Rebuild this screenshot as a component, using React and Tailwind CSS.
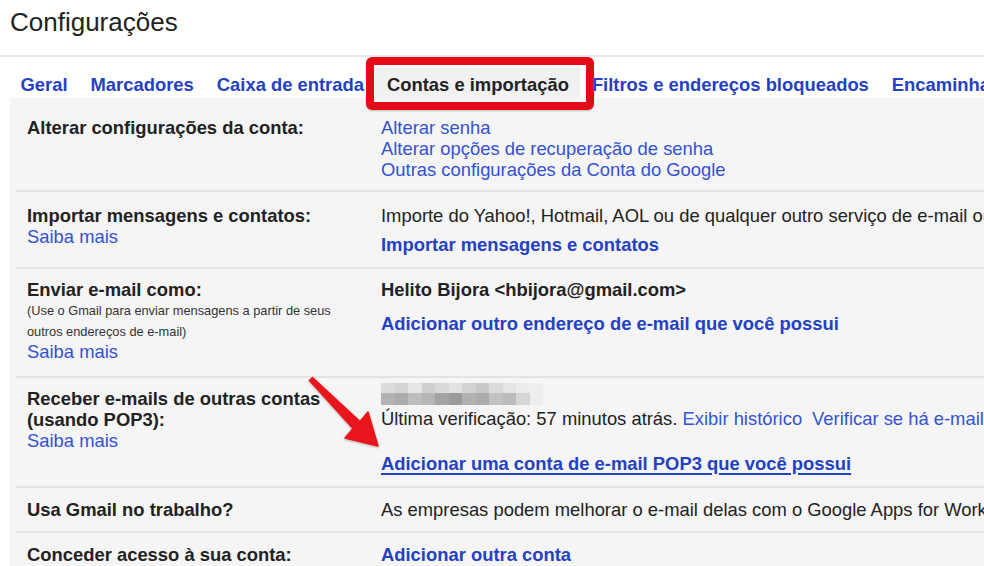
import React from 'react';

const tabs = [
  { label: 'Geral' },
  { label: 'Marcadores' },
  { label: 'Caixa de entrada' },
  { label: 'Contas e importação', active: true },
  { label: 'Filtros e endereços bloqueados' },
  { label: 'Encaminhamento e POP/IMAP' },
];

const blurTop = ['#dcdcdc', '#d4d4d4', '#e6e6e6', '#cfcfcf', '#dadada', '#e2e2e2', '#d2d2d2', '#c9c9c9', '#dbdbdb', '#e5e5e5', '#ececec', '#eeeeee'];
const blurBottom = ['#b3b3b3', '#ababab', '#bdbdbd', '#b6b6b6', '#a3a3a3', '#9a9a9a', '#b1b1b1', '#acacac', '#c2c2c2', '#bbbbbb', '#d6d6d6', '#eeeeee'];

function Row({ className = '', children }) {
  return (
    <div className={`ml-[6px] flex border-b-2 border-[#e3e3e3] pl-[11px] ${className}`}>
      {children}
    </div>
  );
}

export default function App() {
  return (
    <div
      className="relative h-[566px] w-[984px] overflow-hidden bg-white text-[18.4px] leading-[21px] text-[#222]"
      style={{ fontFamily: '"Liberation Sans", Arial, sans-serif' }}
    >
      {/* Title */}
      <div className="h-[57px] border-b-2 border-[#e8e8e8] pl-[10px] pt-[7px] text-[26px] leading-[30px] text-[#222]">
        Configurações
      </div>

      {/* Tabs */}
      <div className="flex h-[41px] items-end whitespace-nowrap pl-[9px]">
        {tabs.map((t) => (
          <div
            key={t.label}
            className={`relative h-[31px] shrink-0 px-[11.5px] pt-[7px] font-bold ${
              t.active ? 'bg-[#f1f1f1] text-[#222]' : 'text-[#2441c2]'
            }`}
          >
            {t.label}
            {t.active && (
              <div className="pointer-events-none absolute -bottom-[12px] -left-[9px] -right-[14px] -top-[10px] rounded-[6px] border-[8px] border-[#e20a16] shadow-[0_1px_2px_rgba(0,0,0,0.25)]" />
            )}
          </div>
        ))}
      </div>

      {/* Settings table */}
      <div className="ml-[10px] bg-[#f5f5f5]">
        <Row className="pb-[10px] pt-[19px]">
          <div className="w-[354px] shrink-0 font-bold">Alterar configurações da conta:</div>
          <div className="flex flex-col whitespace-nowrap text-[#3452d2]">
            <span>Alterar senha</span>
            <span>Alterar opções de recuperação de senha</span>
            <span>Outras configurações da Conta do Google</span>
          </div>
        </Row>

        <Row className="pb-[12px] pt-[13px]">
          <div className="w-[354px] shrink-0">
            <div className="font-bold">Importar mensagens e contatos:</div>
            <div className="text-[#3452d2]">Saiba mais</div>
          </div>
          <div className="whitespace-nowrap">
            <div>Importe do Yahoo!, Hotmail, AOL ou de qualquer outro serviço de e-mail ou conta POP3.</div>
            <div className="mt-[8px] font-bold text-[#2441c2]">Importar mensagens e contatos</div>
          </div>
        </Row>

        <Row className="pb-[14px] pt-[10px]">
          <div className="w-[354px] shrink-0">
            <div className="font-bold">Enviar e-mail como:</div>
            <div className="text-[12.8px] leading-[21px] text-[#333]">
              (Use o Gmail para enviar mensagens a partir de seus
              <br />
              outros endereços de e-mail)
            </div>
            <div className="-mt-[1px] text-[#3452d2]">Saiba mais</div>
          </div>
          <div className="whitespace-nowrap">
            <div className="font-bold">Helito Bijora &lt;hbijora@gmail.com&gt;</div>
            <div className="mt-[13px] font-bold text-[#2441c2]">Adicionar outro endereço de e-mail que você possui</div>
          </div>
        </Row>

        <Row className="pb-[12px] pt-[5px]">
          <div className="mt-[5px] w-[354px] shrink-0">
            <div className="font-bold">Receber e-mails de outras contas</div>
            <div className="font-bold">(usando POP3):</div>
            <div className="text-[#3452d2]">Saiba mais</div>
          </div>
          <div className="whitespace-nowrap">
            <div className="flex flex-col">
              <div className="flex h-[10px]">
                {blurTop.map((c, i) => (
                  <div key={i} className="h-full w-[13.5px]" style={{ backgroundColor: c }} />
                ))}
              </div>
              <div className="flex h-[12px]">
                {blurBottom.map((c, i) => (
                  <div key={i} className="h-full w-[13.5px]" style={{ backgroundColor: c }} />
                ))}
              </div>
            </div>
            <div className="mt-[3px]">
              Última verificação: 57 minutos atrás.{' '}
              <span className="text-[#3452d2]">Exibir histórico</span>
              <span className="ml-[10px] text-[#3452d2]">Verificar se há e-mail agora</span>
            </div>
            <div className="mt-[24px] font-bold text-[#2441c2] underline decoration-[1.5px] underline-offset-[3px]">
              Adicionar uma conta de e-mail POP3 que você possui
            </div>
          </div>
        </Row>

        <Row className="pb-[11px] pt-[11px]">
          <div className="w-[354px] shrink-0 font-bold">Usa Gmail no trabalho?</div>
          <div className="whitespace-nowrap">
            As empresas podem melhorar o e-mail delas com o Google Apps for Work. <span className="text-[#3452d2]">Saiba mais</span>
          </div>
        </Row>

        <Row className="pb-[12px] pt-[11px]">
          <div className="w-[354px] shrink-0 font-bold">Conceder acesso à sua conta:</div>
          <div className="whitespace-nowrap font-bold text-[#2441c2]">Adicionar outra conta</div>
        </Row>
      </div>

      {/* Red arrow annotation */}
      <svg className="pointer-events-none absolute left-0 top-0" width="984" height="566" viewBox="0 0 984 566">
        <defs>
          <filter id="sh" x="-20%" y="-20%" width="140%" height="140%">
            <feDropShadow dx="0" dy="1" stdDeviation="1" floodColor="#000" floodOpacity="0.3" />
          </filter>
        </defs>
        <polygon
          points="312.5,377.5 360,421.5 368,412 378,446 345,438 353,428.5 309.5,380.5"
          fill="#e8141b"
          stroke="#e8141b"
          strokeWidth="1.5"
          strokeLinejoin="round"
          filter="url(#sh)"
        />
      </svg>
    </div>
  );
}
